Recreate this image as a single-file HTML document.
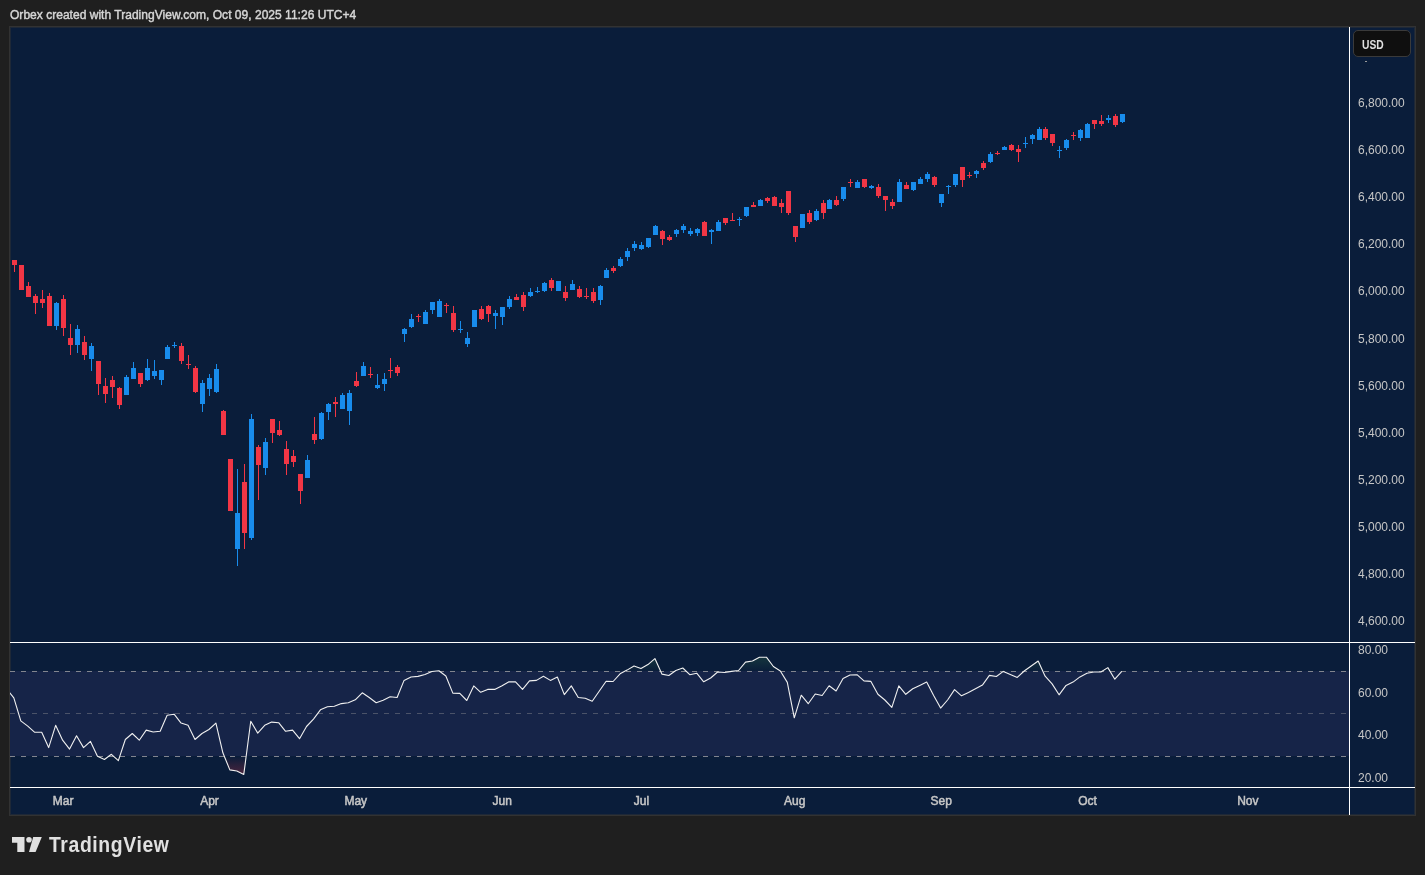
<!DOCTYPE html>
<html><head><meta charset="utf-8"><style>
html,body{margin:0;padding:0;}
body{-webkit-font-smoothing:antialiased;will-change:transform;width:1425px;height:875px;background:#1f1f1f;position:relative;overflow:hidden;font-family:"Liberation Sans",sans-serif;}
#title{position:absolute;left:10px;top:7px;font-size:13px;font-weight:400;transform:scaleX(0.927);transform-origin:0 0;-webkit-text-stroke:0.45px #d6d6d6;color:#d6d6d6;white-space:nowrap;line-height:16px;}
#frame{position:absolute;left:9px;top:26px;width:1405px;height:788px;border:1px solid #323232;background:#0a1d3a;box-shadow:inset 0 0 0 1px #1e2837;}
.pl{position:absolute;left:1358px;font-size:12px;color:#c6c6c6;line-height:15px;white-space:nowrap;}
.tl{position:absolute;top:794px;-webkit-text-stroke:0.5px #c6c6c6;width:60px;text-align:center;font-size:12px;color:#c6c6c6;line-height:15px;}
#usd{position:absolute;left:1353px;top:30px;width:56px;height:25px;border:1px solid #3a3a3a;border-radius:5px;background:#0f0f0f;color:#e0e0e0;font-size:12px;line-height:25px;box-sizing:content-box;}
#usd span{position:absolute;left:8px;top:1px;font-size:13px;font-weight:700;transform:scaleX(0.79);transform-origin:0 0;}
#logo{position:absolute;left:0;top:825px;}
#logotext{position:absolute;left:49px;top:833px;font-size:22px;font-weight:700;letter-spacing:0.7px;transform:scaleX(0.88);transform-origin:0 0;color:#e0e0e0;line-height:24px;}
svg{position:absolute;left:0;top:0;}
</style></head><body>
<div id="title">Orbex created with TradingView.com, Oct 09, 2025 11:26 UTC+4</div>
<div id="frame"></div>
<svg width="1425" height="875" viewBox="0 0 1425 875">
<defs>
<clipPath id="pane1"><rect x="10" y="27" width="1339" height="615"/></clipPath>
<clipPath id="pane2"><rect x="10" y="643" width="1339" height="144"/></clipPath>
<clipPath id="above70"><rect x="10" y="643" width="1339" height="28"/></clipPath>
<clipPath id="below30"><rect x="10" y="757" width="1339" height="30"/></clipPath>
<linearGradient id="gob" x1="0" y1="671.5" x2="0" y2="586" gradientUnits="userSpaceOnUse">
<stop offset="0" stop-color="#4caf50" stop-opacity="0"/><stop offset="1" stop-color="#4caf50" stop-opacity="1"/></linearGradient>
<linearGradient id="gos" x1="0" y1="756.5" x2="0" y2="820" gradientUnits="userSpaceOnUse">
<stop offset="0" stop-color="#f23645" stop-opacity="0"/><stop offset="1" stop-color="#f23645" stop-opacity="1"/></linearGradient>
</defs>
<g shape-rendering="crispEdges">
<rect x="10" y="671" width="1339" height="85" fill="#162448"/>
<line x1="10" y1="671.5" x2="1349" y2="671.5" stroke="#82858f" stroke-width="1" stroke-dasharray="5 6"/>
<line x1="10" y1="713.5" x2="1349" y2="713.5" stroke="#4b5369" stroke-width="1" stroke-dasharray="5 6"/>
<line x1="10" y1="756.5" x2="1349" y2="756.5" stroke="#82858f" stroke-width="1" stroke-dasharray="5 6"/>
</g>
<g clip-path="url(#pane2)">
<g clip-path="url(#above70)"><polygon points="6.86,689.40 13.83,697.90 20.80,720.90 27.77,726.10 34.74,732.30 41.71,732.30 48.67,747.60 55.64,725.30 62.61,740.20 69.58,749.10 76.55,735.70 83.52,747.60 90.48,741.40 97.45,756.20 104.42,759.50 111.39,754.30 118.36,760.70 125.33,739.50 132.29,733.50 139.26,740.20 146.23,730.10 153.20,732.00 160.17,731.30 167.13,715.30 174.10,714.20 181.07,723.10 188.04,725.30 195.01,739.50 201.98,733.50 208.94,729.50 215.91,723.10 222.88,752.80 229.85,769.90 236.82,771.00 243.79,774.40 250.75,721.20 257.72,733.10 264.69,725.30 271.66,722.10 278.63,722.70 285.59,731.30 292.56,730.10 299.53,738.70 306.50,726.50 313.47,719.10 320.44,709.80 327.40,706.80 334.37,706.30 341.34,703.60 348.31,702.70 355.28,699.80 362.25,692.80 369.21,697.50 376.18,702.70 383.15,700.20 390.12,696.80 397.09,697.50 404.06,680.40 411.02,677.00 417.99,676.40 424.96,674.50 431.93,671.50 438.90,670.80 445.86,676.00 452.83,693.10 459.80,693.40 466.77,700.50 473.74,685.90 480.71,692.30 487.67,689.40 494.64,689.40 501.61,685.90 508.58,681.90 515.55,681.90 522.52,689.40 529.48,680.90 536.45,680.40 543.42,676.30 550.39,680.40 557.36,677.00 564.32,694.60 571.29,685.90 578.26,697.50 585.23,698.30 592.20,701.20 599.17,691.30 606.13,681.20 613.10,681.50 620.07,673.80 627.04,670.10 634.01,666.00 640.98,668.60 647.94,664.60 654.91,658.60 661.88,674.10 668.85,675.50 675.82,670.50 682.78,668.00 689.75,674.70 696.72,673.20 703.69,681.80 710.66,678.00 717.63,672.00 724.59,672.50 731.56,671.40 738.53,670.50 745.50,662.10 752.47,661.00 759.44,657.20 766.40,657.20 773.37,666.50 780.34,671.00 787.31,682.40 794.28,717.80 801.25,695.20 808.21,703.70 815.18,694.00 822.15,695.50 829.12,685.80 836.09,691.00 843.05,678.40 850.02,675.00 856.99,674.70 863.96,680.90 870.93,681.40 877.90,694.30 884.86,700.00 891.83,707.40 898.80,685.80 905.77,694.30 912.74,688.80 919.71,685.40 926.67,682.10 933.64,695.50 940.61,708.10 947.58,700.00 954.55,689.60 961.51,695.80 968.48,692.50 975.45,688.80 982.42,685.10 989.39,675.40 996.36,676.50 1003.32,671.40 1010.29,674.40 1017.26,677.40 1024.23,671.00 1031.20,666.00 1038.17,661.00 1045.13,676.20 1052.10,683.90 1059.07,694.80 1066.04,685.40 1073.01,682.10 1079.98,676.90 1086.94,673.20 1093.91,672.00 1100.88,672.00 1107.85,667.60 1114.82,679.20 1121.78,671.40 1121.78,671.5 6.86,671.5" fill="url(#gob)"/></g>
<g clip-path="url(#below30)"><polygon points="6.86,689.40 13.83,697.90 20.80,720.90 27.77,726.10 34.74,732.30 41.71,732.30 48.67,747.60 55.64,725.30 62.61,740.20 69.58,749.10 76.55,735.70 83.52,747.60 90.48,741.40 97.45,756.20 104.42,759.50 111.39,754.30 118.36,760.70 125.33,739.50 132.29,733.50 139.26,740.20 146.23,730.10 153.20,732.00 160.17,731.30 167.13,715.30 174.10,714.20 181.07,723.10 188.04,725.30 195.01,739.50 201.98,733.50 208.94,729.50 215.91,723.10 222.88,752.80 229.85,769.90 236.82,771.00 243.79,774.40 250.75,721.20 257.72,733.10 264.69,725.30 271.66,722.10 278.63,722.70 285.59,731.30 292.56,730.10 299.53,738.70 306.50,726.50 313.47,719.10 320.44,709.80 327.40,706.80 334.37,706.30 341.34,703.60 348.31,702.70 355.28,699.80 362.25,692.80 369.21,697.50 376.18,702.70 383.15,700.20 390.12,696.80 397.09,697.50 404.06,680.40 411.02,677.00 417.99,676.40 424.96,674.50 431.93,671.50 438.90,670.80 445.86,676.00 452.83,693.10 459.80,693.40 466.77,700.50 473.74,685.90 480.71,692.30 487.67,689.40 494.64,689.40 501.61,685.90 508.58,681.90 515.55,681.90 522.52,689.40 529.48,680.90 536.45,680.40 543.42,676.30 550.39,680.40 557.36,677.00 564.32,694.60 571.29,685.90 578.26,697.50 585.23,698.30 592.20,701.20 599.17,691.30 606.13,681.20 613.10,681.50 620.07,673.80 627.04,670.10 634.01,666.00 640.98,668.60 647.94,664.60 654.91,658.60 661.88,674.10 668.85,675.50 675.82,670.50 682.78,668.00 689.75,674.70 696.72,673.20 703.69,681.80 710.66,678.00 717.63,672.00 724.59,672.50 731.56,671.40 738.53,670.50 745.50,662.10 752.47,661.00 759.44,657.20 766.40,657.20 773.37,666.50 780.34,671.00 787.31,682.40 794.28,717.80 801.25,695.20 808.21,703.70 815.18,694.00 822.15,695.50 829.12,685.80 836.09,691.00 843.05,678.40 850.02,675.00 856.99,674.70 863.96,680.90 870.93,681.40 877.90,694.30 884.86,700.00 891.83,707.40 898.80,685.80 905.77,694.30 912.74,688.80 919.71,685.40 926.67,682.10 933.64,695.50 940.61,708.10 947.58,700.00 954.55,689.60 961.51,695.80 968.48,692.50 975.45,688.80 982.42,685.10 989.39,675.40 996.36,676.50 1003.32,671.40 1010.29,674.40 1017.26,677.40 1024.23,671.00 1031.20,666.00 1038.17,661.00 1045.13,676.20 1052.10,683.90 1059.07,694.80 1066.04,685.40 1073.01,682.10 1079.98,676.90 1086.94,673.20 1093.91,672.00 1100.88,672.00 1107.85,667.60 1114.82,679.20 1121.78,671.40 1121.78,756.5 6.86,756.5" fill="url(#gos)"/></g>
<polyline points="6.86,689.40 13.83,697.90 20.80,720.90 27.77,726.10 34.74,732.30 41.71,732.30 48.67,747.60 55.64,725.30 62.61,740.20 69.58,749.10 76.55,735.70 83.52,747.60 90.48,741.40 97.45,756.20 104.42,759.50 111.39,754.30 118.36,760.70 125.33,739.50 132.29,733.50 139.26,740.20 146.23,730.10 153.20,732.00 160.17,731.30 167.13,715.30 174.10,714.20 181.07,723.10 188.04,725.30 195.01,739.50 201.98,733.50 208.94,729.50 215.91,723.10 222.88,752.80 229.85,769.90 236.82,771.00 243.79,774.40 250.75,721.20 257.72,733.10 264.69,725.30 271.66,722.10 278.63,722.70 285.59,731.30 292.56,730.10 299.53,738.70 306.50,726.50 313.47,719.10 320.44,709.80 327.40,706.80 334.37,706.30 341.34,703.60 348.31,702.70 355.28,699.80 362.25,692.80 369.21,697.50 376.18,702.70 383.15,700.20 390.12,696.80 397.09,697.50 404.06,680.40 411.02,677.00 417.99,676.40 424.96,674.50 431.93,671.50 438.90,670.80 445.86,676.00 452.83,693.10 459.80,693.40 466.77,700.50 473.74,685.90 480.71,692.30 487.67,689.40 494.64,689.40 501.61,685.90 508.58,681.90 515.55,681.90 522.52,689.40 529.48,680.90 536.45,680.40 543.42,676.30 550.39,680.40 557.36,677.00 564.32,694.60 571.29,685.90 578.26,697.50 585.23,698.30 592.20,701.20 599.17,691.30 606.13,681.20 613.10,681.50 620.07,673.80 627.04,670.10 634.01,666.00 640.98,668.60 647.94,664.60 654.91,658.60 661.88,674.10 668.85,675.50 675.82,670.50 682.78,668.00 689.75,674.70 696.72,673.20 703.69,681.80 710.66,678.00 717.63,672.00 724.59,672.50 731.56,671.40 738.53,670.50 745.50,662.10 752.47,661.00 759.44,657.20 766.40,657.20 773.37,666.50 780.34,671.00 787.31,682.40 794.28,717.80 801.25,695.20 808.21,703.70 815.18,694.00 822.15,695.50 829.12,685.80 836.09,691.00 843.05,678.40 850.02,675.00 856.99,674.70 863.96,680.90 870.93,681.40 877.90,694.30 884.86,700.00 891.83,707.40 898.80,685.80 905.77,694.30 912.74,688.80 919.71,685.40 926.67,682.10 933.64,695.50 940.61,708.10 947.58,700.00 954.55,689.60 961.51,695.80 968.48,692.50 975.45,688.80 982.42,685.10 989.39,675.40 996.36,676.50 1003.32,671.40 1010.29,674.40 1017.26,677.40 1024.23,671.00 1031.20,666.00 1038.17,661.00 1045.13,676.20 1052.10,683.90 1059.07,694.80 1066.04,685.40 1073.01,682.10 1079.98,676.90 1086.94,673.20 1093.91,672.00 1100.88,672.00 1107.85,667.60 1114.82,679.20 1121.78,671.40" fill="none" stroke="#f0f0f0" stroke-width="1.1" stroke-linejoin="round"/>
</g>
<g clip-path="url(#pane1)" shape-rendering="crispEdges">
<path d="M14 260h1v12h-1zM12 260h5v5h-5zM21 265h1v25h-1zM19 265h5v25h-5zM28 282h1v15h-1zM26 286h5v11h-5zM35 294h1v20h-1zM33 296h5v7h-5zM42 290h1v18h-1zM40 299h5v4h-5zM49 293h1v33h-1zM47 296h5v30h-5zM63 295h1v41h-1zM61 299h5v29h-5zM70 324h1v31h-1zM68 338h5v7h-5zM84 336h1v24h-1zM82 342h5v13h-5zM98 361h1v34h-1zM96 361h5v23h-5zM105 378h1v25h-1zM103 386h5v8h-5zM112 376h1v22h-1zM110 380h5v7h-5zM119 387h1v22h-1zM117 388h5v17h-5zM140 373h1v14h-1zM138 373h5v11h-5zM181 343h1v21h-1zM179 346h5v15h-5zM188 355h1v14h-1zM186 364h5v1h-5zM195 366h1v27h-1zM193 368h5v24h-5zM223 410h1v25h-1zM221 411h5v24h-5zM230 459h1v52h-1zM228 459h5v52h-5zM244 464h1v85h-1zM242 482h5v51h-5zM258 445h1v55h-1zM256 447h5v18h-5zM272 419h1v24h-1zM270 419h5v14h-5zM279 421h1v15h-1zM277 430h5v5h-5zM286 441h1v34h-1zM284 449h5v15h-5zM293 450h1v17h-1zM291 456h5v6h-5zM300 474h1v30h-1zM298 474h5v17h-5zM314 417h1v27h-1zM312 434h5v6h-5zM335 397h1v20h-1zM333 402h5v2h-5zM356 372h1v15h-1zM354 381h5v5h-5zM370 367h1v11h-1zM368 374h5v1h-5zM390 358h1v20h-1zM388 370h5v1h-5zM397 365h1v11h-1zM395 367h5v6h-5zM418 314h1v8h-1zM416 316h5v1h-5zM446 303h1v10h-1zM444 305h5v1h-5zM453 306h1v26h-1zM451 313h5v17h-5zM481 306h1v14h-1zM479 309h5v10h-5zM488 305h1v17h-1zM486 306h5v8h-5zM516 294h1v6h-1zM514 297h5v3h-5zM523 292h1v19h-1zM521 295h5v12h-5zM551 278h1v13h-1zM549 280h5v8h-5zM565 286h1v15h-1zM563 292h5v6h-5zM579 286h1v12h-1zM577 289h5v8h-5zM586 288h1v11h-1zM584 296h5v1h-5zM593 288h1v15h-1zM591 292h5v9h-5zM613 266h1v7h-1zM611 268h5v3h-5zM662 230h1v15h-1zM660 231h5v8h-5zM669 235h1v6h-1zM667 237h5v3h-5zM704 221h1v15h-1zM702 222h5v14h-5zM725 218h1v7h-1zM723 218h5v5h-5zM732 213h1v8h-1zM730 220h5v1h-5zM753 202h1v5h-1zM751 205h5v2h-5zM767 197h1v6h-1zM765 198h5v3h-5zM774 196h1v10h-1zM772 197h5v9h-5zM781 199h1v14h-1zM779 203h5v4h-5zM788 191h1v24h-1zM786 191h5v22h-5zM795 226h1v16h-1zM793 226h5v11h-5zM809 210h1v14h-1zM807 213h5v9h-5zM823 200h1v19h-1zM821 203h5v10h-5zM836 196h1v10h-1zM834 200h5v5h-5zM850 179h1v8h-1zM848 182h5v1h-5zM864 179h1v9h-1zM862 179h5v8h-5zM878 184h1v14h-1zM876 187h5v9h-5zM885 196h1v15h-1zM883 196h5v4h-5zM892 199h1v10h-1zM890 202h5v4h-5zM906 182h1v7h-1zM904 185h5v4h-5zM934 176h1v11h-1zM932 177h5v8h-5zM962 167h1v20h-1zM960 167h5v13h-5zM969 172h1v6h-1zM967 175h5v1h-5zM983 161h1v9h-1zM981 163h5v5h-5zM997 151h1v4h-1zM995 153h5v1h-5zM1011 144h1v7h-1zM1009 145h5v5h-5zM1018 145h1v17h-1zM1016 149h5v3h-5zM1045 127h1v13h-1zM1043 129h5v9h-5zM1052 134h1v12h-1zM1050 134h5v9h-5zM1073 132h1v8h-1zM1071 135h5v1h-5zM1094 120h1v9h-1zM1092 120h5v4h-5zM1101 115h1v11h-1zM1099 121h5v3h-5zM1115 114h1v13h-1zM1113 116h5v9h-5z" fill="#f23645"/>
<path d="M56 302h1v28h-1zM54 303h5v23h-5zM77 325h1v28h-1zM75 329h5v16h-5zM91 343h1v28h-1zM89 346h5v13h-5zM126 375h1v20h-1zM124 377h5v18h-5zM133 362h1v17h-1zM131 368h5v11h-5zM147 359h1v22h-1zM145 368h5v12h-5zM154 360h1v19h-1zM152 371h5v5h-5zM161 370h1v15h-1zM159 370h5v10h-5zM167 345h1v14h-1zM165 347h5v12h-5zM174 342h1v6h-1zM172 345h5v1h-5zM202 380h1v32h-1zM200 383h5v21h-5zM209 374h1v22h-1zM207 378h5v11h-5zM216 364h1v29h-1zM214 369h5v23h-5zM237 469h1v97h-1zM235 513h5v36h-5zM251 414h1v126h-1zM249 419h5v119h-5zM265 438h1v37h-1zM263 442h5v26h-5zM307 455h1v23h-1zM305 460h5v18h-5zM321 412h1v28h-1zM319 413h5v26h-5zM328 403h1v17h-1zM326 404h5v8h-5zM342 393h1v16h-1zM340 395h5v14h-5zM349 390h1v35h-1zM347 393h5v18h-5zM363 362h1v14h-1zM361 366h5v10h-5zM377 374h1v15h-1zM375 385h5v3h-5zM384 373h1v18h-1zM382 379h5v5h-5zM404 328h1v14h-1zM402 329h5v5h-5zM411 314h1v14h-1zM409 319h5v8h-5zM425 310h1v14h-1zM423 312h5v12h-5zM432 302h1v12h-1zM430 302h5v8h-5zM439 299h1v18h-1zM437 301h5v16h-5zM460 321h1v12h-1zM458 329h5v1h-5zM467 332h1v15h-1zM465 338h5v6h-5zM474 310h1v17h-1zM472 310h5v17h-5zM495 310h1v19h-1zM493 313h5v3h-5zM502 307h1v18h-1zM500 307h5v10h-5zM509 296h1v13h-1zM507 299h5v8h-5zM530 288h1v9h-1zM528 292h5v4h-5zM537 287h1v6h-1zM535 291h5v1h-5zM544 282h1v10h-1zM542 283h5v8h-5zM558 281h1v10h-1zM556 281h5v10h-5zM572 280h1v10h-1zM570 284h5v6h-5zM600 285h1v20h-1zM598 286h5v14h-5zM606 268h1v10h-1zM604 270h5v8h-5zM620 257h1v10h-1zM618 259h5v7h-5zM627 248h1v13h-1zM625 251h5v6h-5zM634 241h1v10h-1zM632 244h5v4h-5zM641 242h1v8h-1zM639 245h5v4h-5zM648 238h1v10h-1zM646 238h5v9h-5zM655 225h1v10h-1zM653 226h5v9h-5zM676 229h1v8h-1zM674 230h5v4h-5zM683 224h1v9h-1zM681 226h5v4h-5zM690 228h1v8h-1zM688 231h5v3h-5zM697 228h1v8h-1zM695 229h5v4h-5zM711 229h1v15h-1zM709 230h5v2h-5zM718 220h1v11h-1zM716 222h5v9h-5zM739 217h1v9h-1zM737 219h5v1h-5zM746 207h1v10h-1zM744 207h5v9h-5zM760 199h1v7h-1zM758 200h5v6h-5zM802 214h1v14h-1zM800 214h5v14h-5zM816 209h1v12h-1zM814 211h5v9h-5zM829 199h1v10h-1zM827 200h5v9h-5zM843 187h1v14h-1zM841 187h5v12h-5zM857 180h1v8h-1zM855 182h5v6h-5zM871 185h1v4h-1zM869 186h5v2h-5zM899 179h1v23h-1zM897 182h5v20h-5zM913 182h1v9h-1zM911 182h5v8h-5zM920 177h1v7h-1zM918 179h5v5h-5zM927 172h1v10h-1zM925 174h5v5h-5zM941 194h1v13h-1zM939 194h5v9h-5zM948 185h1v9h-1zM946 186h5v1h-5zM955 174h1v13h-1zM953 174h5v11h-5zM976 170h1v8h-1zM974 171h5v3h-5zM990 152h1v11h-1zM988 154h5v8h-5zM1004 146h1v4h-1zM1002 147h5v3h-5zM1025 137h1v11h-1zM1023 143h5v1h-5zM1032 134h1v10h-1zM1030 135h5v4h-5zM1039 127h1v13h-1zM1037 129h5v11h-5zM1059 146h1v12h-1zM1057 150h5v1h-5zM1066 139h1v11h-1zM1064 140h5v8h-5zM1080 129h1v12h-1zM1078 130h5v8h-5zM1087 123h1v15h-1zM1085 124h5v14h-5zM1108 115h1v8h-1zM1106 118h5v2h-5zM1122 114h1v9h-1zM1120 114h5v8h-5z" fill="#188cec"/>
</g>
<g shape-rendering="crispEdges" fill="#ffffff">
<rect x="1349" y="27" width="1" height="788"/>
<rect x="10" y="642" width="1405" height="1"/>
<rect x="10" y="787" width="1405" height="1"/>
<rect x="1365" y="61" width="2" height="1" fill="#9a9a9a"/>
</g>
<g fill="#e0e0e0">
<path d="M12 837h12.5v15h-7.2v-9.2h-5.3z"/>
<circle cx="29" cy="839.8" r="2.8"/>
<path d="M33.2 837h8.6l-6.2 15h-6.6z"/>
</g>
</svg>
<div class="pl" style="top:96.3px">6,800.00</div><div class="pl" style="top:143.4px">6,600.00</div><div class="pl" style="top:189.5px">6,400.00</div><div class="pl" style="top:236.5px">6,200.00</div><div class="pl" style="top:283.6px">6,000.00</div><div class="pl" style="top:331.7px">5,800.00</div><div class="pl" style="top:378.8px">5,600.00</div><div class="pl" style="top:425.9px">5,400.00</div><div class="pl" style="top:473.0px">5,200.00</div><div class="pl" style="top:520.0px">5,000.00</div><div class="pl" style="top:567.1px">4,800.00</div><div class="pl" style="top:614.2px">4,600.00</div>
<div class="pl" style="top:643.1px">80.00</div><div class="pl" style="top:685.9px">60.00</div><div class="pl" style="top:727.5px">40.00</div><div class="pl" style="top:771.0px">20.00</div>
<div class="tl" style="left:33.2px">Mar</div><div class="tl" style="left:179.5px">Apr</div><div class="tl" style="left:325.8px">May</div><div class="tl" style="left:472.2px">Jun</div><div class="tl" style="left:611.5px">Jul</div><div class="tl" style="left:764.8px">Aug</div><div class="tl" style="left:911.2px">Sep</div><div class="tl" style="left:1057.5px">Oct</div><div class="tl" style="left:1217.8px">Nov</div>
<div id="usd"><span>USD</span></div>
<div id="logotext">TradingView</div>
</body></html>
